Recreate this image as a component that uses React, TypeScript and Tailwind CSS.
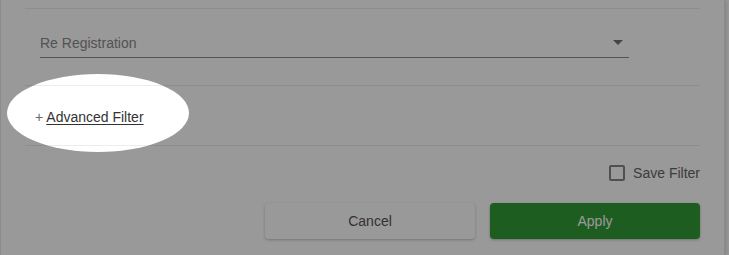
import React from "react";

export default function App() {
  return (
    <div className="relative w-[729px] h-[255px] overflow-hidden bg-white font-['Liberation_Sans',Arial,sans-serif] text-[14px] leading-4">
      <div className="w-[725px] h-[255px] border-l border-r border-[#e8e8e8] shadow-[2px_0_3px_rgba(0,0,0,0.12)] pl-6 pr-6 pt-[8px]">
        <div className="h-px bg-[#ececec]" />
        <div className="mt-[17px] ml-[15px] w-[589px] h-[32px] flex items-end justify-between pb-[6px] border-b border-[#8c8c8c]">
          <span className="text-[#8a8a8a]">Re Registration</span>
          <svg width="10" height="5" viewBox="0 0 10 5" className="mr-[6px] mb-[6px]">
            <polygon points="0,0 10,0 5,5" fill="#737373" />
          </svg>
        </div>
        <div className="mt-[27px] h-px bg-[#ececec]" />
        <div className="h-[59px] pt-[23px] pl-[10px] text-[#333333]">
          <span className="text-[#666666]">+ </span>
          <span className="underline underline-offset-[2px]">Advanced Filter</span>
        </div>
        <div className="h-px bg-[#ececec]" />
        <div className="mt-[19px] h-[16px] flex items-center justify-end">
          <span className="w-[16px] h-[16px] border-2 border-[#858585] rounded-[2px]" />
          <span className="ml-2 text-[#656565]">Save Filter</span>
        </div>
        <div className="mt-[22px] flex justify-end gap-[15px]">
          <button className="w-[210px] h-[36px] rounded-[4px] bg-white text-[#555555] shadow-[0_1px_3px_rgba(0,0,0,0.25)]">
            Cancel
          </button>
          <button className="w-[210px] h-[36px] rounded-[4px] bg-[#329c36] text-white shadow-[0_1px_3px_rgba(0,0,0,0.25)]">
            Apply
          </button>
        </div>
      </div>
      <div className="absolute left-[7px] top-[74px] w-[182px] h-[78px] rounded-[50%] shadow-[0_0_0_2000px_rgba(0,0,0,0.4)]" />
    </div>
  );
}
